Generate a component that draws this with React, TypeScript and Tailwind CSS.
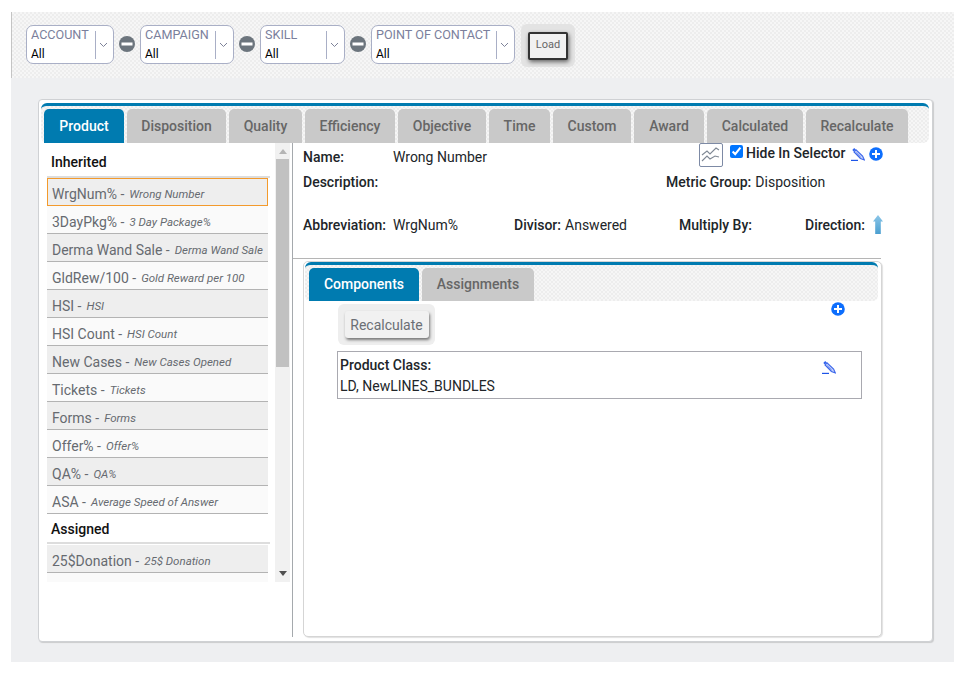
import React from "react";

const pattern =
  "bg-[repeating-conic-gradient(#ededed_0_25%,#f6f6f6_0_50%)] bg-[length:4px_4px]";

function Filter({ label, width }: { label: string; width: string }) {
  return (
    <div className={`${width} h-[39px] flex items-center bg-white border border-[#a9afc6] rounded-[7px] pl-1 pr-[5px]`}>
      <div className="flex-1 min-w-0">
        <div className="text-[12.6px] leading-[16px] text-[#7b7f9c] whitespace-nowrap">{label}</div>
        <div className="text-[12px] leading-[16px] mt-[3px] text-black">All</div>
      </div>
      <div className="w-px h-[28px] bg-[#a9afc6] mr-[3px]" />
      <svg width="9" height="6" viewBox="0 0 9 6" fill="none" stroke="#7d8299" strokeWidth="1">
        <path d="M1 1l3.5 3.5L8 1" />
      </svg>
    </div>
  );
}

function Minus() {
  return (
    <svg width="16" height="16" viewBox="0 0 16 16" className="mx-[5px] mt-[11px] shrink-0">
      <circle cx="8" cy="8" r="8" fill="#6c757d" />
      <rect x="2.5" y="6.5" width="11" height="3" fill="#fff" />
    </svg>
  );
}

function Pencil() {
  return (
    <svg width="14" height="14" viewBox="0 0 14 14" fill="none" className="shrink-0">
      <path d="M1.3 3 3.2.9l1.6 1.5-2 2.2z" fill="#2f62ee" />
      <path d="M3 5l2-2.2 6.6 6.3L13.4 13l-4-1.5z" fill="#c5d2fc" stroke="#3b66ea" strokeWidth="1.1" />
      <path d="M5.3 5.8l4.3 4.2" stroke="#3b66ea" strokeWidth="0.8" />
      <path d="M0 13.4h7" stroke="#1d55e8" strokeWidth="1.2" />
    </svg>
  );
}

function Plus() {
  return (
    <svg width="14" height="14" viewBox="0 0 14 14" className="shrink-0">
      <circle cx="7" cy="7" r="6.8" fill="#0d6efd" />
      <path d="M3 7h8M7 3v8" stroke="#fff" strokeWidth="2" />
    </svg>
  );
}

const tabs: [string, string][] = [
  ["Product", "w-[80px]"],
  ["Disposition", "w-[99px]"],
  ["Quality", "w-[73px]"],
  ["Efficiency", "w-[90px]"],
  ["Objective", "w-[88px]"],
  ["Time", "w-[61px]"],
  ["Custom", "w-[78px]"],
  ["Award", "w-[70px]"],
  ["Calculated", "w-[96px]"],
  ["Recalculate", "w-[102px]"],
];

const items: [string, string][] = [
  ["WrgNum%", "Wrong Number"],
  ["3DayPkg%", "3 Day Package%"],
  ["Derma Wand Sale", "Derma Wand Sale"],
  ["GldRew/100", "Gold Reward per 100"],
  ["HSI", "HSI"],
  ["HSI Count", "HSI Count"],
  ["New Cases", "New Cases Opened"],
  ["Tickets", "Tickets"],
  ["Forms", "Forms"],
  ["Offer%", "Offer%"],
  ["QA%", "QA%"],
  ["ASA", "Average Speed of Answer"],
];

function Item({ name, sub, index }: { name: string; sub: string; index: number }) {
  const first = index === 0;
  return (
    <div
      className={`h-[28px] w-[221px] flex items-center whitespace-nowrap ${
        index % 2 === 0 ? "bg-[#eeeeee]" : "bg-[#fafafa]"
      } ${first ? "border border-[#f39a2c] pl-[4px] pt-[4px]" : "border-b border-[#b3b3b3] pl-[5px] pt-[6px]"} text-[#666a70]`}
    >
      <span className="text-[14px]">{name} - </span>
      <span className="text-[11.5px] italic ml-[5px] mt-px">{sub}</span>
    </div>
  );
}

export default function App() {
  return (
    <div className="w-[966px] h-[674px] bg-white pt-3 pl-[11px] overflow-hidden text-[#212529] [font-family:Roboto,sans-serif]">
      <div className="w-[943px] h-[650px] bg-[#eeeff1] flex flex-col">
        <div className={`h-[66px] shrink-0 border-l border-[#c4c4c4] flex items-start pl-[14px] pt-[13px] ${pattern}`}>
          <Filter label="ACCOUNT" width="w-[88px]" />
          <Minus />
          <Filter label="CAMPAIGN" width="w-[94px]" />
          <Minus />
          <Filter label="SKILL" width="w-[85px]" />
          <Minus />
          <Filter label="POINT OF CONTACT" width="w-[144px]" />
          <div className="ml-[6px] -mt-px w-[54px] h-[43px] bg-[#e3e3e3] rounded-[6px] flex items-center justify-center">
            <button className="w-[40px] h-[28px] bg-[#f1f1f1] border-2 border-[#333333] rounded-[2px] text-[11px] text-[#666] shadow-[1px_2px_4px_rgba(0,0,0,0.55)]">
              Load
            </button>
          </div>
        </div>

        <div className="ml-[27px] mt-[21px] w-[895px] h-[543px] bg-white border border-[#cfd1d4] rounded-[4px] shadow-[1px_1px_1px_rgba(0,0,0,0.15)] pt-[3px] px-px flex flex-col">
          <div className={`mx-px w-[888px] h-[40px] shrink-0 border-t-[3px] border-[#007bb0] rounded-t-[6px] rounded-b-[6px] pl-[3px] flex gap-[3px] items-end ${pattern}`}>
            {tabs.map(([t, w], i) => (
              <div
                key={t}
                className={`${w} h-[34px] rounded-t-[5px] flex items-center justify-center text-[14px] font-medium ${
                  i === 0 ? "bg-[#007bb0] text-white" : "bg-[#c9c9c9] text-[#666666]"
                }`}
              >
                {t}
              </div>
            ))}
          </div>

          <div className="flex flex-1 min-h-0">
            <div className="w-[253px] h-[494px] shrink-0 border-r border-[#a5a9ad] flex pl-[7px]">
              <div className="w-[228px] h-[439px] shrink-0 overflow-hidden">
                <div className="h-[35px] w-[223px] border-b-2 border-[#dddddd] flex items-center pl-1 pt-[6px] text-[14px] font-medium text-[#111]">
                  Inherited
                </div>
                {items.map(([a, b], i) => (
                  <Item key={a} name={a} sub={b} index={i} />
                ))}
                <div className="h-[30px] w-[223px] border-b-2 border-[#dddddd] flex items-center pl-1 pt-[3px] text-[14px] font-medium text-[#111]">
                  Assigned
                </div>
                <div className="mt-px">
                  <Item name="25$Donation" sub="25$ Donation" index={2} />
                </div>
                <div className="w-[221px] h-[10px] bg-[#fafafa]" />
              </div>
              <div className="w-[15px] h-[439px] bg-[#f1f1f1] flex flex-col items-center">
                <svg width="8" height="5" viewBox="0 0 8 5" className="mt-[6px]">
                  <path d="M4 0l4 5H0z" fill="#b5b5b5" />
                </svg>
                <div className="w-[13px] h-[208px] bg-[#c1c1c1] mt-[5px]" />
                <svg width="8" height="5" viewBox="0 0 8 5" className="mt-auto mb-[6px]">
                  <path d="M4 5l4-5H0z" fill="#505050" />
                </svg>
              </div>
            </div>

            <div className="flex-1 min-w-0 flex flex-col">
              <div className="h-[116px] w-[588px] shrink-0 border-b border-[#b5b5b5] pl-[10px] text-[14px] flex flex-col">
                <div className="flex items-start h-[26px] [&>*]:shrink-0">
                  <span className="w-[90px] font-medium mt-[4px]">Name:</span>
                  <span className="w-[306px] mt-[4px]">Wrong Number</span>
                  <div className="w-[24px] h-[24px] border border-[#7d8aa5] rounded-[2px] flex items-center justify-center">
                    <svg width="20" height="16" viewBox="0 0 20 16" fill="none" stroke="#7f8894" strokeWidth="1.1">
                      <path d="M1 8l5-4 3 3 6-6 3 2" />
                      <path d="M1 14l5-5 3 3 5-3 4 1" />
                    </svg>
                  </div>
                  <input type="checkbox" defaultChecked className="w-[13px] h-[13px] ml-[7px] mt-[2px] accent-[#0075ff]" />
                  <span className="ml-[3px] font-medium w-[105px] whitespace-nowrap">Hide In Selector</span>
                  <div className="flex items-center gap-[4px] mt-[4px]">
                    <Pencil />
                    <Plus />
                  </div>
                </div>
                <div className="flex h-[20px] mt-[3px] items-center">
                  <span className="font-medium w-[363px]">Description:</span>
                  <span className="font-medium whitespace-nowrap">Metric Group:</span>
                  <span className="ml-[4px]">Disposition</span>
                </div>
                <div className="flex mt-[23px] h-[20px] items-center [&>*]:shrink-0">
                  <span className="font-medium w-[90px]">Abbreviation:</span>
                  <span className="w-[121px]">WrgNum%</span>
                  <span className="font-medium">Divisor:</span>
                  <span className="ml-[4px] w-[114px]">Answered</span>
                  <span className="font-medium w-[126px]">Multiply By:</span>
                  <span className="font-medium">Direction:</span>
                  <svg width="12" height="20" viewBox="0 0 12 20" className="ml-[7px]">
                    <defs>
                      <linearGradient id="arrowFill" x1="0" y1="0" x2="0" y2="1">
                        <stop offset="0" stopColor="#8cc6e8" />
                        <stop offset="1" stopColor="#4a9fd0" />
                      </linearGradient>
                    </defs>
                    <path d="M6 0l5 6.5H8.8V19H3.2V6.5H1z" fill="url(#arrowFill)" />
                  </svg>
                </div>
              </div>

              <div className="ml-[10px] mt-[2px] w-[579px] h-[376px] border border-[#d5d5d5] rounded-[5px] shadow-[1px_1px_1px_rgba(0,0,0,0.12)] bg-white flex flex-col">
                <div className={`w-[573px] mx-px h-[39px] shrink-0 border-t-[3px] border-[#007bb0] rounded-t-[6px] rounded-b-[5px] pl-[4px] flex items-end gap-[3px] ${pattern}`}>
                  <div className="w-[110px] h-[33px] rounded-t-[5px] bg-[#007bb0] text-white text-[14px] font-medium flex items-center justify-center">
                    Components
                  </div>
                  <div className="w-[112px] h-[33px] rounded-t-[5px] bg-[#c9c9c9] text-[#666666] text-[14px] font-medium flex items-center justify-center">
                    Assignments
                  </div>
                </div>
                <div className="flex pl-[34px] pr-[36px] h-[41px] mt-[3px]">
                  <div className="w-[97px] h-[41px] bg-[#eeeeee] rounded-[6px] flex items-center justify-center">
                    <button className="w-[84px] h-[27px] bg-[#f1f1f1] rounded-[3px] text-[14px] text-[#6b6f75] pt-px shadow-[1px_2px_3px_rgba(0,0,0,0.5)]">
                      Recalculate
                    </button>
                  </div>
                  <div className="ml-auto -mt-[2px]">
                    <Plus />
                  </div>
                </div>
                <div className="ml-[33px] mt-[6px] w-[525px] h-[48px] border border-[#a9a9b0] flex justify-between pl-[2px] pr-[25px] text-[14px]">
                  <div>
                    <div className="font-medium leading-[20px] mt-[3px]">Product Class:</div>
                    <div className="leading-[20px] mt-px">LD, NewLINES_BUNDLES</div>
                  </div>
                  <div className="pt-[8px]">
                    <Pencil />
                  </div>
                </div>
              </div>
            </div>
          </div>
        </div>
      </div>
    </div>
  );
}
